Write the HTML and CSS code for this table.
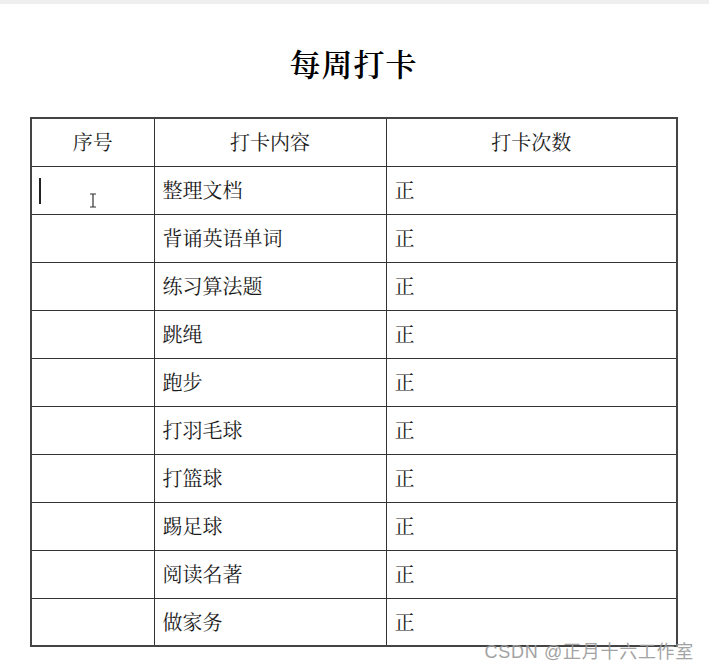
FILE: index.html
```html
<!DOCTYPE html>
<html lang="zh">
<head>
<meta charset="utf-8">
<link rel="stylesheet" href="styles.css">
</head>
<body>
<div class="topbar"></div>
<div class="page">
  <h1 class="title">每周打卡</h1>
  <table class="sheet">
    <colgroup><col class="c1"><col class="c2"><col class="c3"></colgroup>
    <thead>
      <tr><th>序号</th><th>打卡内容</th><th>打卡次数</th></tr>
    </thead>
    <tbody>
      <tr><td class="first"><span class="caret"></span><svg class="ibeam" width="8" height="15" viewBox="0 0 8 15"><path d="M1 1H7M4 1V14M1 14H7" stroke="#333" stroke-width="1.2" fill="none"/></svg></td><td>整理文档</td><td>正</td></tr>
      <tr><td></td><td>背诵英语单词</td><td>正</td></tr>
      <tr><td></td><td>练习算法题</td><td>正</td></tr>
      <tr><td></td><td>跳绳</td><td>正</td></tr>
      <tr><td></td><td>跑步</td><td>正</td></tr>
      <tr><td></td><td>打羽毛球</td><td>正</td></tr>
      <tr><td></td><td>打篮球</td><td>正</td></tr>
      <tr><td></td><td>踢足球</td><td>正</td></tr>
      <tr><td></td><td>阅读名著</td><td>正</td></tr>
      <tr><td></td><td>做家务</td><td>正</td></tr>
    </tbody>
  </table>
  <div class="watermark">CSDN @正月十六工作室</div>
</div>
</body>
</html>
```
FILE: styles.css
```css
html, body {
  margin: 0;
  padding: 0;
  background: #fff;
}
body {
  width: 709px;
  height: 668px;
  overflow: hidden;
  font-family: "Noto Serif CJK SC", "Noto Sans CJK SC", "Liberation Serif", serif;
  color: #111;
}
.topbar {
  height: 4px;
  background: #efefef;
}
.page {
  position: relative;
  padding: 0 0 0 30px;
}
.title {
  margin: 0;
  padding-top: 39px;
  height: 72px;
  box-sizing: border-box;
  width: 647px;
  text-align: center;
  font-size: 31px;
  line-height: 40px;
  font-weight: 600;
  letter-spacing: 1px;
  color: #000;
}
.sheet {
  border-collapse: collapse;
  table-layout: fixed;
  width: 646px;
  border: 2px solid #444;
  margin-top: 41px;
}
.c1 { width: 123px; }
.c2 { width: 232px; }
.c3 { width: 291px; }
.sheet th, .sheet td {
  border: 1px solid #333;
  height: 48px;
  padding: 0 0 0 8px;
  font-size: 20px;
  font-weight: normal;
  color: #1a1a1a;
  box-sizing: border-box;
  vertical-align: middle;
  line-height: 24px;
}
.sheet th {
  text-align: center;
  padding: 0;
}
.first {
  position: relative;
}
.caret {
  position: absolute;
  left: 7px;
  top: 11px;
  width: 2px;
  height: 26px;
  background: #222;
}
.ibeam {
  position: absolute;
  left: 57px;
  top: 26px;
}
.watermark {
  position: absolute;
  right: 15px;
  top: 633px;
  font-family: "Liberation Sans", "Noto Sans CJK SC", sans-serif;
  font-size: 18px;
  letter-spacing: 0.7px;
  color: #9a9a9a;
  opacity: 0.9;
}
```
